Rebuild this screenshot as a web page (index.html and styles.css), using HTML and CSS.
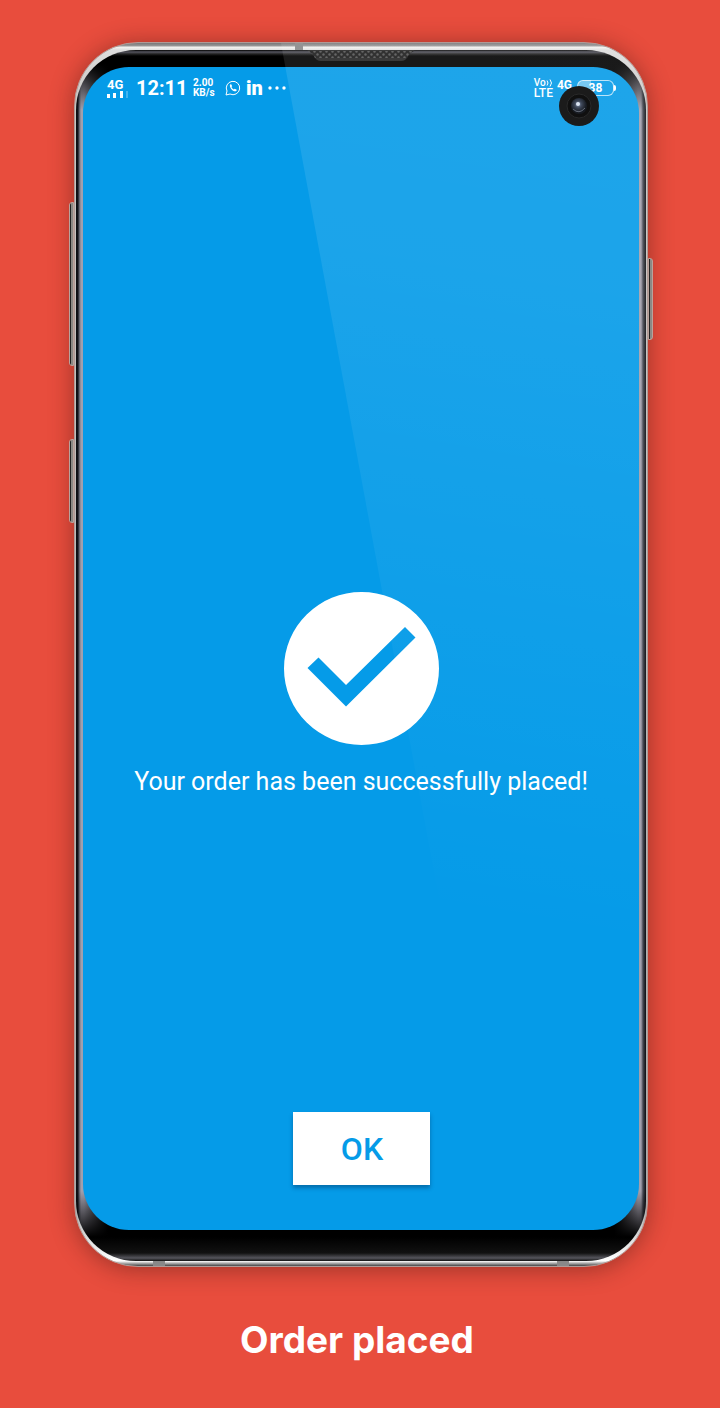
FILE: index.html
```html
<!DOCTYPE html>
<html lang="en">
<head>
<meta charset="utf-8">
<meta name="viewport" content="width=device-width, initial-scale=1">
<title>Order placed</title>
<link rel="stylesheet" href="styles.css">
</head>
<body>
<div class="page">
  <div class="phone">
    <span class="side-key volume"></span>
    <span class="side-key assistant"></span>
    <span class="side-key power"></span>
    <div class="bezel">
      <svg class="speaker" width="108" height="11" viewBox="0 0 108 11" aria-hidden="true">
        <defs>
          <pattern id="mesh" width="6" height="6" patternUnits="userSpaceOnUse">
            <rect width="6" height="6" fill="#1b1b1b"/>
            <circle cx="1.5" cy="1.5" r="1.2" fill="#555"/>
            <circle cx="4.5" cy="4.5" r="1.2" fill="#555"/>
          </pattern>
        </defs>
        <path d="M0 0H108Q103 2 101 6Q99 11 94 11H14Q9 11 7 6Q5 2 0 0Z" fill="#242424"/>
        <path d="M1 1H107Q102 3 100 8H8Q6 3 1 1Z" fill="url(#mesh)"/>
      </svg>
      <main class="screen">
        <header class="status">
          <div class="signal">
            <span>4G</span>
            <svg width="22" height="7" viewBox="0 0 22 7" aria-hidden="true">
              <path d="M0 3h3v4H0zM6 2h3v5H6zM13 0h3v7h-3z" fill="#fff"/>
              <path d="M19 0h2v7h-2z" fill="#fff" opacity=".25"/>
            </svg>
          </div>
          <time class="clock">12:11</time>
          <div class="speed"><span>2.00</span><span>KB/s</span></div>
          <svg class="chat" width="16" height="16" viewBox="0 0 16 16" fill="none" stroke="#fff" aria-hidden="true">
            <path d="M1 15l1-4a6.7 6.7 0 1 1 3 3z" stroke-width="1"/>
            <path d="M5 4.5l1.2-.3 1 2-.8.9c.5 1.1 1.3 1.9 2.4 2.4l1-.8 1.9 1-.3 1.2c-1 1-3 .3-4.5-1.2C5.4 8.2 4.4 5.8 5 4.5z" fill="#fff" stroke="none"/>
          </svg>
          <span class="linkedin">in</span>
          <svg class="dots" width="18" height="4" viewBox="0 0 18 4" fill="#fff" aria-hidden="true">
            <circle cx="2" cy="2" r="1.7"/><circle cx="9" cy="2" r="1.7"/><circle cx="16" cy="2" r="1.7"/>
          </svg>
          <div class="volte">
            <span class="vo">Vo<svg width="7" height="8" viewBox="0 0 7 8" fill="none" stroke="#fff" aria-hidden="true"><path d="M1 1.5q2 2.500 0 5M4 .5q3 3.500 0 7"/></svg></span>
            <span>LTE</span>
          </div>
          <span class="network">4G</span>
          <div class="battery"><span>38</span></div>
        </header>
        <svg class="tick" width="155" height="153" viewBox="0 0 155 153" role="img" aria-label="Success">
          <path fill="#fff" fill-rule="evenodd" d="M77.5 0A77.5 76.5 0 0 1 77.5 153A77.5 76.5 0 0 1 77.5 0ZM23.5 76L62 114.5L131.5 45.5L121 35L62 93L34.5 65.5Z"/>
        </svg>
        <p class="message">Your order has been successfully placed!</p>
        <button class="ok" type="button">OK</button>
      </main>
    </div>
    <span class="glare"></span>
    <svg class="camera" width="40" height="40" viewBox="0 0 40 40" aria-hidden="true">
      <defs>
        <radialGradient id="lens" cx=".45" cy=".4">
          <stop offset="0" stop-color="#8292ad"/><stop offset=".45" stop-color="#3c4556"/><stop offset="1" stop-color="#171b22"/>
        </radialGradient>
      </defs>
      <circle cx="20" cy="20" r="20" fill="#1b1b1b"/>
      <circle cx="20" cy="20" r="12" fill="#101010" stroke="#292929"/>
      <circle cx="20" cy="20" r="8" fill="url(#lens)"/>
      <circle cx="19" cy="18" r="2" fill="#dce5f4"/>
      <path d="M14 23q6 6 12-1" fill="none" stroke="#646b78"/>
    </svg>
  </div>
  <h1 class="caption">Order placed</h1>
</div>
</body>
</html>
```

FILE: styles.css
```css
* { box-sizing: border-box; }

body {
  margin: 0;
  min-height: 100vh;
  background: #e84d3d;
  color: #fff;
  font-family: Roboto, "Liberation Sans", sans-serif;
}

.page {
  max-width: 720px;
  margin: 0 auto;
  padding: 42px 72px 36px 74px;
}

.phone {
  position: relative;
  padding: 7px 1px 5px;
  border-radius: 64px;
  border: 1px solid #b09a96;
  background:
    linear-gradient(#888, #888) 220px 0 / 8px 7px no-repeat,
    linear-gradient(#888, #888) 78px 100% / 12px 6px no-repeat,
    linear-gradient(#888, #888) calc(100% - 78px) 100% / 12px 6px no-repeat,
    linear-gradient(#777 0, #999 3px, #f4f4f0 4px, #ddd 7px, #c9c5c2 60px, #aaa calc(100% - 60px), #fff calc(100% - 5px), #444 100%);
  box-shadow: 0 2px 24px rgba(60, 20, 15, .45);
}

.bezel {
  position: relative;
  padding: 17px 7px 31px;
  border-radius: 60px;
  background:
    linear-gradient(#000 0, #555560 2px, #222 4px, #000 6px, #000 14px, transparent 60px, transparent calc(100% - 70px), #000 calc(100% - 24px), #111 calc(100% - 8px), #55555c calc(100% - 3px), #111 100%),
    linear-gradient(to right, #0b0c10 0, #11131a 2px, #555864 3px, #a29fac 5px, #a29fac 8px, #000 32px, #000 calc(100% - 32px), #a29fac calc(100% - 8px), #a29fac calc(100% - 5px), #444752 calc(100% - 3px), #0b0c10 100%);
}

.speaker {
  position: absolute;
  top: 0;
  left: 50%;
  transform: translateX(-50%);
}

.screen {
  display: grid;
  grid-template-rows: auto 11fr auto auto 7fr auto;
  justify-items: center;
  aspect-ratio: 556 / 1163;
  padding: 10px 24px 45px;
  border-radius: 46px;
  background: #059be8;
}

.status {
  display: flex;
  align-items: center;
  justify-self: stretch;
  height: 22px;
  font-weight: 700;
}

.signal { display: flex; flex-direction: column; width: 29px; }
.signal span { font-size: 13px; line-height: 12px; }
.clock { width: 57px; font-size: 20px; line-height: 22px; }
.speed { display: flex; flex-direction: column; width: 32px; font-size: 10px; line-height: 10px; }
.linkedin { margin: 0 5px; font-size: 20px; line-height: 20px; font-weight: 900; }

.volte {
  display: flex;
  flex-direction: column;
  margin-left: auto;
  font-size: 12px;
  line-height: 10px;
  font-weight: 500;
}
.vo { display: flex; align-items: center; font-size: 10px; }
.network { align-self: flex-start; margin: 0 5px 0 4px; font-size: 12px; line-height: 16px; }

.battery {
  position: relative;
  width: 37px;
  height: 16px;
  margin-right: 1px;
  border: 1px solid rgba(255, 255, 255, .7);
  border-radius: 6px;
  background: linear-gradient(to right, rgba(255, 255, 255, .4) 38%, transparent 38%);
  font-size: 12px;
  line-height: 14px;
  text-align: center;
}
.battery::after {
  content: "";
  position: absolute;
  top: 4px;
  right: -3px;
  width: 2px;
  height: 6px;
  border-radius: 0 2px 2px 0;
  background: #fff;
}

.tick { grid-row: 3; display: block; }

.message {
  grid-row: 4;
  margin: 21px 0 0;
  font-size: 25px;
  line-height: 32px;
  text-align: center;
}

.ok {
  grid-row: 6;
  min-width: 137px;
  padding: 19px 22px 17px 24px;
  border: 0;
  background: #fff;
  color: #059be8;
  font: 500 32px/37px Roboto, "Liberation Sans", sans-serif;
  box-shadow: 0 3px 4px rgba(0, 40, 80, .4);
}

.glare {
  position: absolute;
  inset: 0 0 24% 0;
  border-radius: 64px 64px 0 0;
  background: linear-gradient(190deg, rgba(255, 255, 255, .1) 0, rgba(255, 255, 255, .09) 25%, rgba(255, 255, 255, .04) 60%, rgba(255, 255, 255, 0) 88%);
  clip-path: polygon(36% 0, 100% 0, 100% 100%, 66% 100%);
  pointer-events: none;
}

.camera { position: absolute; top: 43px; right: 48px; }

.side-key {
  position: absolute;
  width: 5px;
  border: 1px solid #b9a29b;
  background: linear-gradient(to right, #222 50%, #8b8985 50%);
}
.volume { left: -6px; top: 13%; height: 164px; border-radius: 3px 0 0 3px; }
.assistant { left: -6px; top: 32.4%; height: 84px; border-radius: 3px 0 0 3px; }
.power { right: -6px; top: 17.6%; height: 82px; border-radius: 0 3px 3px 0; }

.caption {
  margin: 45px 8px 0 0;
  font: 700 37px/56px Inter, "Open Sans", sans-serif;
  text-align: center;
}
```
